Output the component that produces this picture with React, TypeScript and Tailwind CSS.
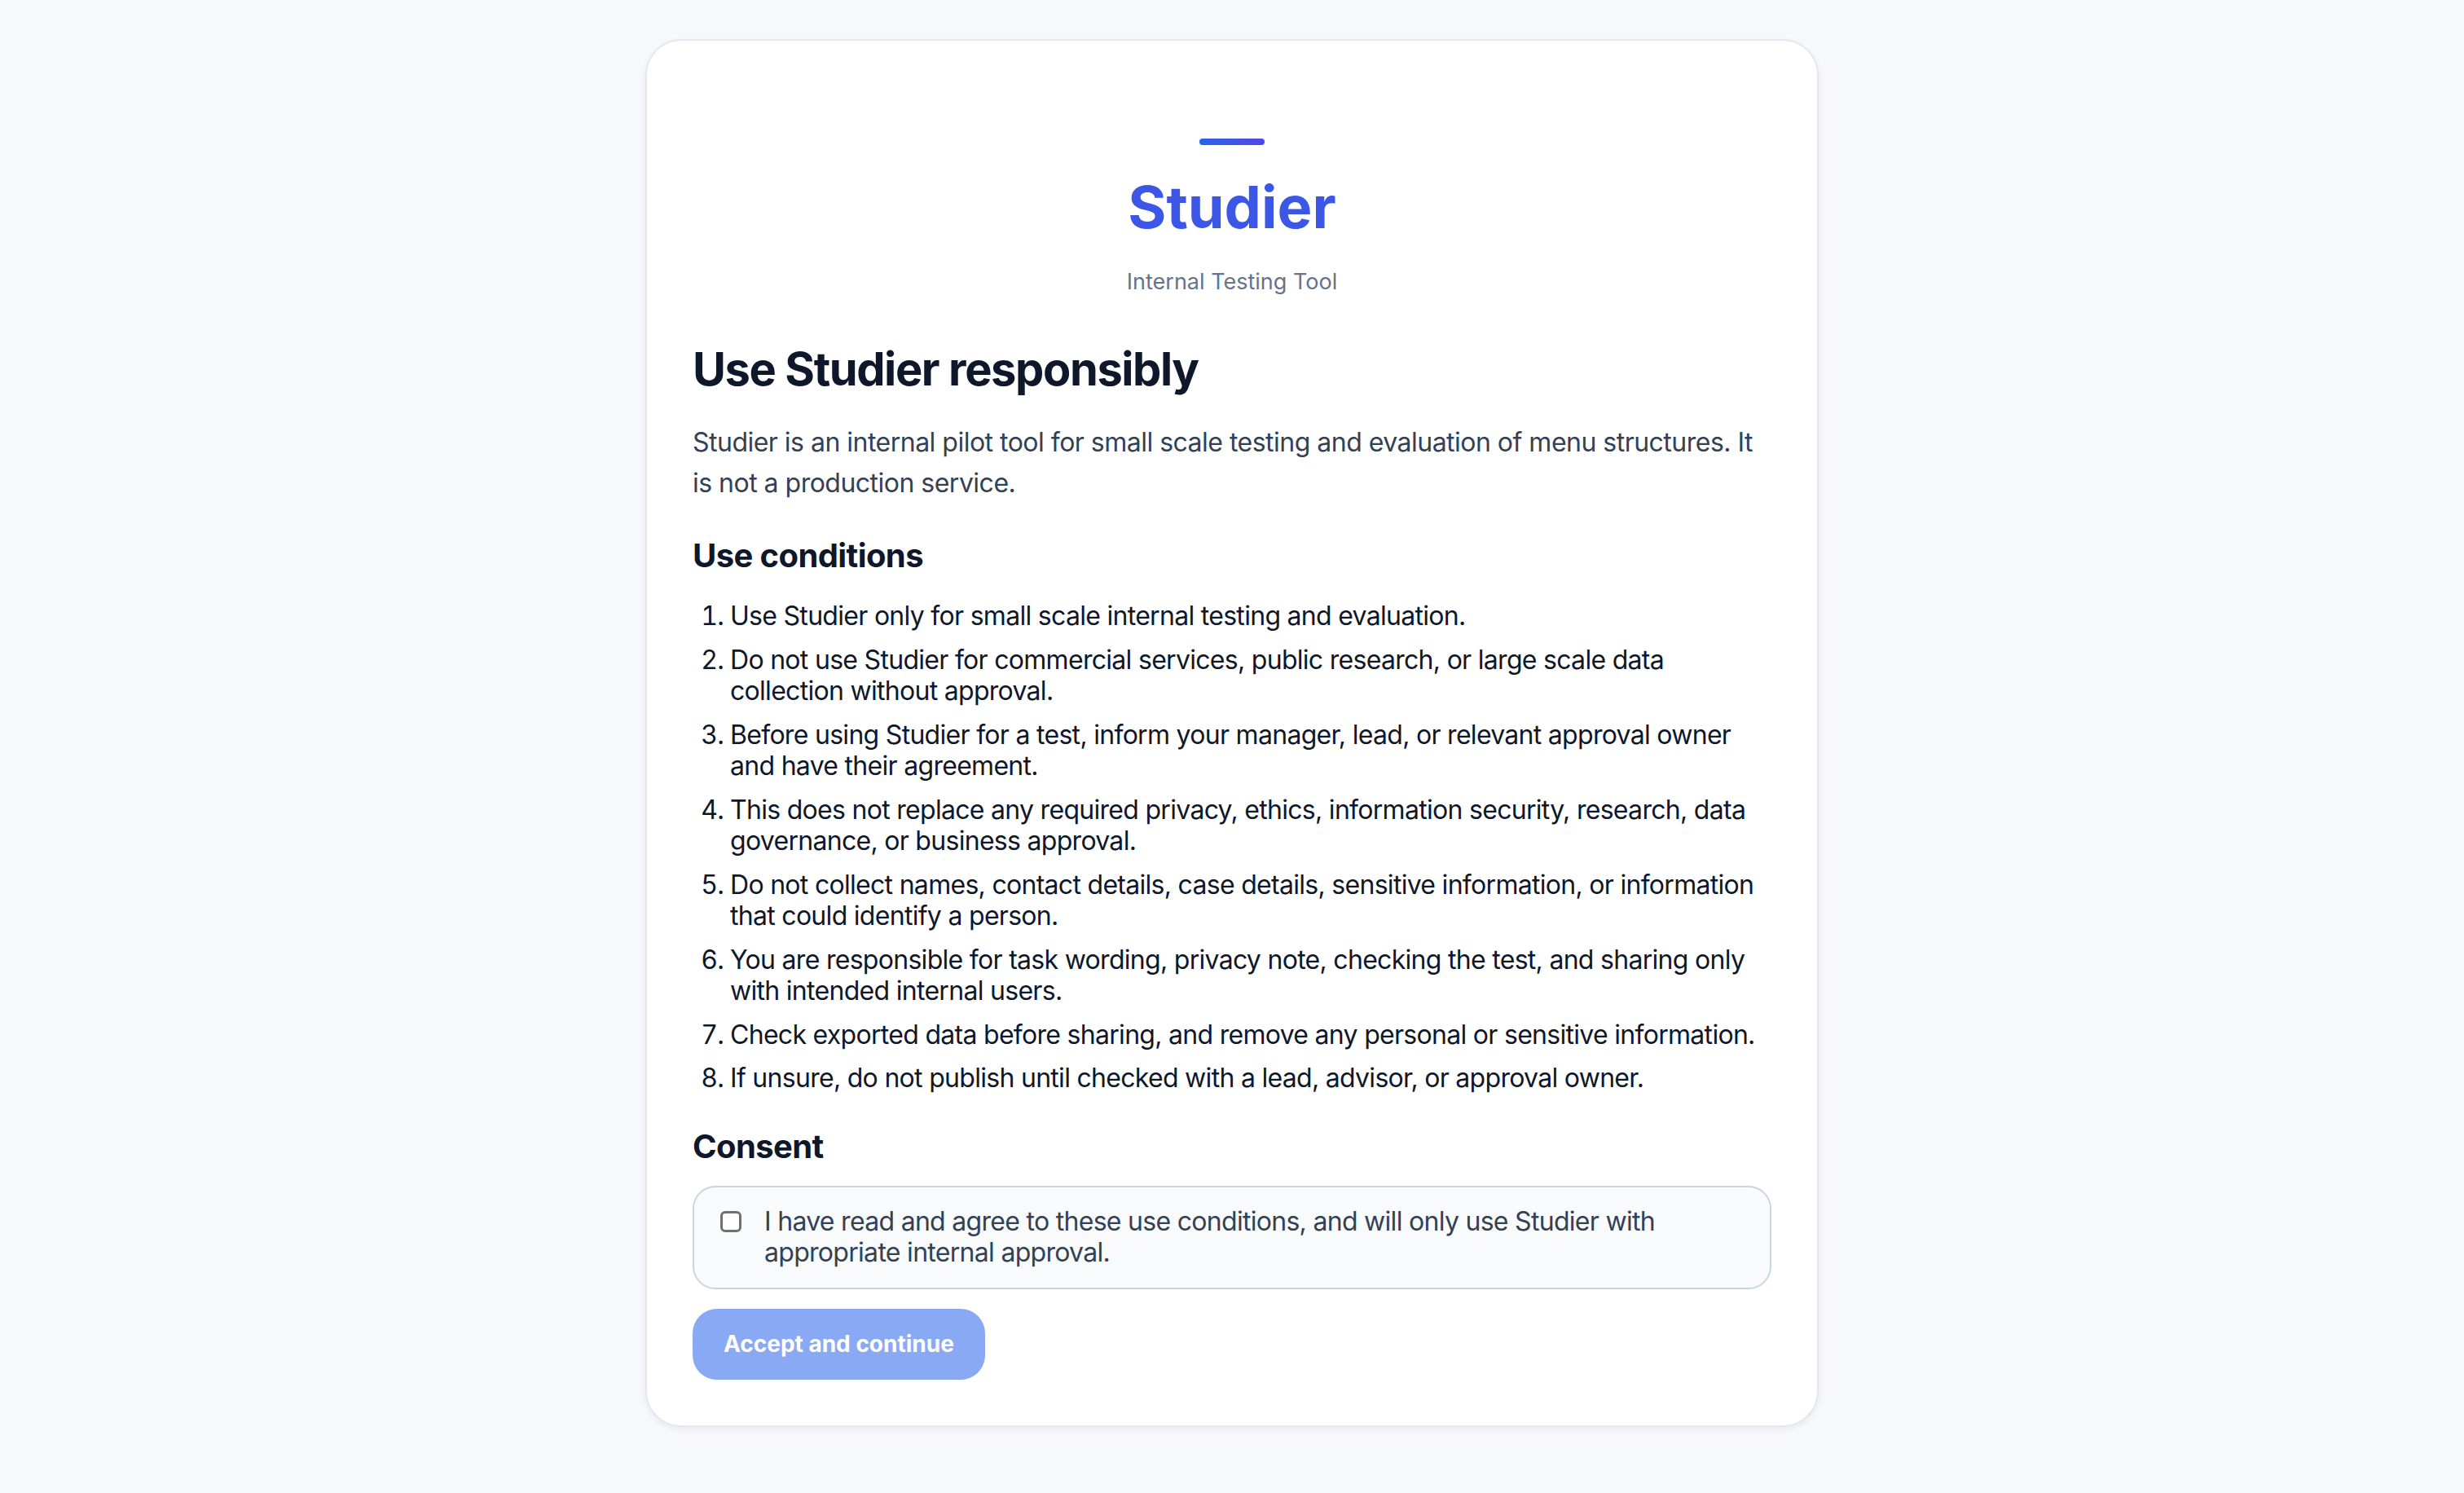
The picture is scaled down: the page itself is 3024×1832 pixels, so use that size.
const conditions = [
  'Use Studier only for small scale internal testing and evaluation.',
  'Do not use Studier for commercial services, public research, or large scale data collection without approval.',
  'Before using Studier for a test, inform your manager, lead, or relevant approval owner and have their agreement.',
  'This does not replace any required privacy, ethics, information security, research, data governance, or business approval.',
  'Do not collect names, contact details, case details, sensitive information, or information that could identify a person.',
  'You are responsible for task wording, privacy note, checking the test, and sharing only with intended internal users.',
  'Check exported data before sharing, and remove any personal or sensitive information.',
  'If unsure, do not publish until checked with a lead, advisor, or approval owner.',
];

export default function App() {
  return (
    <main className="min-h-screen bg-[#f7f8fb] pt-[48px] pb-[48px] font-['Inter',sans-serif]">
      <div className="mx-auto w-[1440px] rounded-[44px] border-2 border-[#e2e8f0] bg-white p-[56px] shadow-[0_3px_8px_rgba(15,23,42,0.06)]">
        {/* Header */}
        <header className="flex flex-col items-center pt-[64px]">
          <div className="h-[8px] w-[80px] rounded-full bg-gradient-to-r from-[#2563eb] to-[#4f46e5]" />
          <h1 className="mt-[32px] text-[72px] font-bold leading-[88px] text-[#3c56e6]">Studier</h1>
          <p className="mt-[32px] text-[27px] leading-[32px] text-[#64748b]">Internal Testing Tool</p>
        </header>

        <h2 className="mt-[57px] text-[56px] font-bold leading-[68px] tracking-[-0.025em] text-[#0f172a]">
          Use Studier responsibly
        </h2>
        <p className="mt-[31px] text-[32px] leading-[50px] tracking-[-0.016em] text-[#334155]">
          Studier is an internal pilot tool for small scale testing and evaluation of menu structures. It is not a
          production service.
        </p>

        <h3 className="mt-[40px] text-[40px] font-bold leading-[48px] tracking-[-0.015em] text-[#0f172a]">
          Use conditions
        </h3>
        <ol className="mt-[31px] flex list-decimal flex-col gap-[15px] pl-[46px] text-[32px] leading-[38.5px] tracking-[-0.022em] text-[#0f172a]">
          {conditions.map((c) => (
            <li key={c}>{c}</li>
          ))}
        </ol>

        <h3 className="mt-[40px] text-[40px] font-bold leading-[48px] tracking-[-0.015em] text-[#0f172a]">Consent</h3>
        <label className="mt-[24px] flex items-start gap-[28px] rounded-[28px] border-2 border-[#cbd5e1] bg-[#f8fafc] px-[32px] py-[23px]">
          <input
            type="checkbox"
            className="mt-[6px] h-[26px] w-[26px] shrink-0 appearance-none rounded-[6px] border-[3px] border-[#707070] bg-white"
          />
          <span className="text-[32px] leading-[38.5px] tracking-[-0.022em] text-[#334155]">
            I have read and agree to these use conditions, and will only use Studier with appropriate internal
            approval.
          </span>
        </label>

        <button
          disabled
          className="mt-[24px] rounded-[30px] bg-[#8aa9f5] px-[38px] py-[24px] text-[28px] font-bold leading-[39px] text-white"
        >
          Accept and continue
        </button>
      </div>
    </main>
  );
}
